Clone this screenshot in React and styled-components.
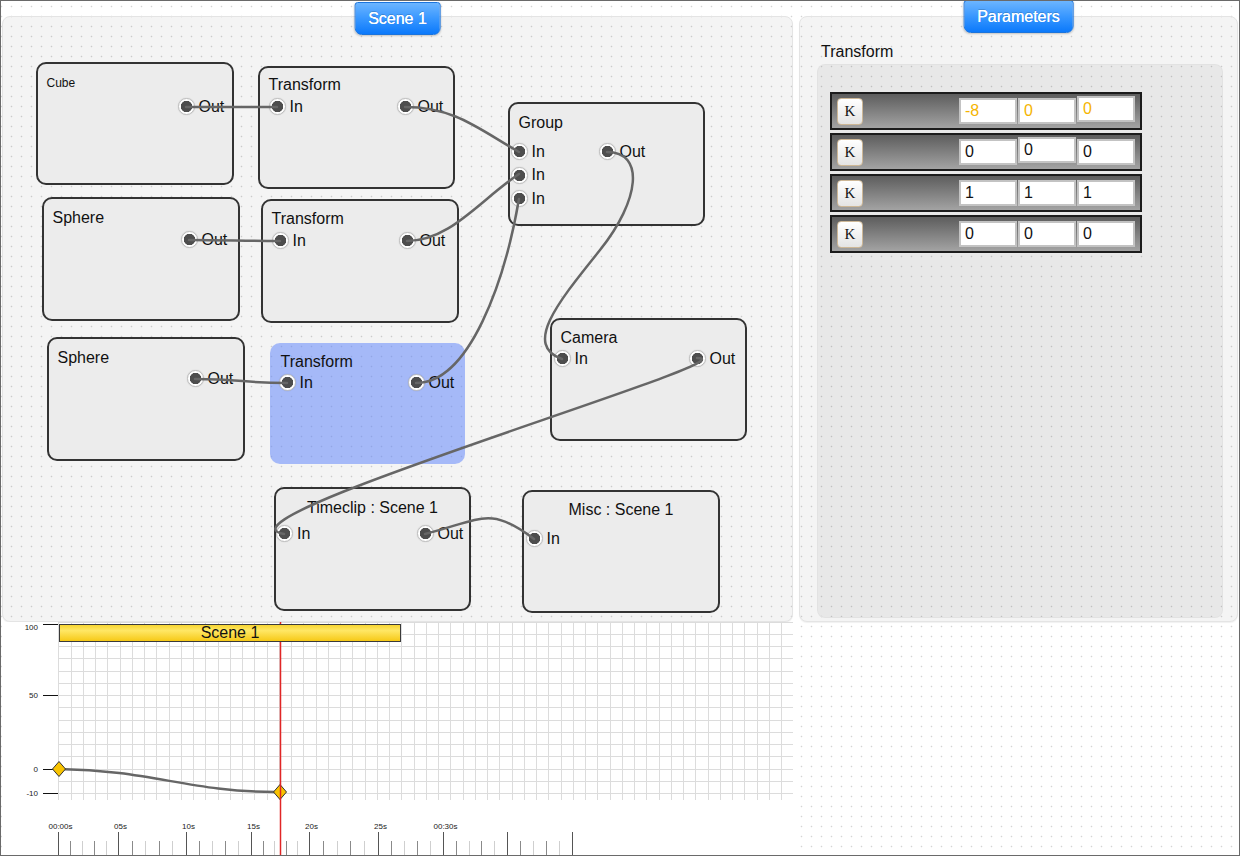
import React from 'react'
import styled, { createGlobalStyle } from 'styled-components'

const GlobalStyle = createGlobalStyle`
  html, body {
    margin: 0;
    padding: 0;
    background: #fff;
  }
  body {
    font-family: 'Liberation Sans', Arial, sans-serif;
    color: #111;
  }
`

const dots = `radial-gradient(circle at 1.5px 6.5px, rgba(0,0,0,0.17) 0.6px, transparent 1.1px)`

const Screen = styled.div`
  width: 1240px;
  height: 856px;
  box-sizing: border-box;
  border: 1px solid #6a6a6a;
  background-color: #fff;
  background-image: ${dots};
  background-size: 10px 10px;
  background-attachment: fixed;
  display: grid;
  grid-template-columns: 791px 439px;
  grid-template-rows: 606px 1fr;
  column-gap: 6px;
  padding: 15px 0 0 1px;
  overflow: hidden;
`

const Panel = styled.section`
  position: relative;
  box-sizing: border-box;
  background-color: #f4f4f4;
  background-image: ${dots};
  background-size: 10px 10px;
  background-attachment: fixed;
  border: 1px solid #e4e4e4;
  border-radius: 8px;
  box-shadow: 0 1px 1px rgba(0, 0, 0, 0.06);
`

const Tab = styled.div`
  position: absolute;
  top: ${(p) => p.$top}px;
  left: 50%;
  transform: translateX(-50%);
  height: 33px;
  padding: 0 13px;
  box-sizing: border-box;
  display: flex;
  align-items: center;
  background: linear-gradient(#6cb5ff, #3897ff 50%, #0b79fb);
  border: 1px solid #1b74dc;
  border-radius: 3px 3px 7px 7px;
  box-shadow: 0 1px 2px rgba(0, 0, 0, 0.2);
  color: #fff;
  font-size: 16px;
  text-shadow: 0 0 0.4px #fff, 0 -1px 0 rgba(0, 0, 0, 0.18);
  white-space: nowrap;
  z-index: 3;
`

/* ---------- node graph ---------- */

const NodeBox = styled.div.attrs((p) => ({
  style: { left: p.$x - 3, top: p.$y - 17, width: p.$w, height: p.$h },
}))`
  position: absolute;
  box-sizing: border-box;
  background: ${(p) => (p.$selected ? 'rgba(100, 136, 251, 0.55)' : '#ececec')};
  border: 2px solid ${(p) => (p.$selected ? 'transparent' : '#333')};
  border-radius: 10px;
  display: flex;
  flex-direction: column;
  z-index: 1;
`

const NodeTitle = styled.div`
  margin-top: ${(p) => p.$top}px;
  padding: 0 8.5px;
  height: 20px;
  line-height: 20px;
  font-size: ${(p) => (p.$small ? 12 : 16)}px;
  text-align: ${(p) => (p.$center ? 'center' : 'left')};
  white-space: nowrap;
`

const PortGrid = styled.div`
  display: grid;
  grid-template-columns: ${(p) => p.$split}px auto;
  margin-top: ${(p) => p.$top}px;
`

const PortCol = styled.div`
  display: flex;
  flex-direction: column;
  gap: ${(p) => p.$gap || 0}px;
  padding-left: ${(p) => p.$pad || 0}px;
`

const PortRow = styled.div`
  display: flex;
  align-items: center;
  height: 22px;
  font-size: 16px;
`

const Socket = styled.span`
  flex: none;
  width: 17px;
  height: 17px;
  box-sizing: border-box;
  border-radius: 50%;
  border: 1px solid #bdbdbd;
  background: radial-gradient(circle, #4d4d4d 0 5.4px, #fff 6px);
  box-shadow: 0 0 1px rgba(0, 0, 0, 0.25);
`

const PortLabel = styled.span`
  margin-left: 4px;
`

const WireLayer = styled.svg`
  position: absolute;
  inset: 0;
  width: 100%;
  height: 100%;
  pointer-events: none;
  overflow: visible;
  z-index: 2;
`

const NODES = [
  { title: 'Cube', x: 36, y: 62, w: 198, h: 123, small: true, ty: 21, py: 45, outX: 150 },
  { title: 'Transform', x: 258, y: 66, w: 197, h: 123, ty: 19, py: 41, ins: 1, inX: 19, outX: 147 },
  { title: 'Sphere', x: 42, y: 197, w: 198, h: 124, ty: 21, py: 43, outX: 147 },
  { title: 'Transform', x: 261, y: 199, w: 198, h: 124, ty: 20, py: 42, ins: 1, inX: 19, outX: 146 },
  { title: 'Sphere', x: 47, y: 337, w: 198, h: 124, ty: 21, py: 42, outX: 148 },
  { title: 'Transform', x: 270, y: 343, w: 195, h: 121, ty: 19, py: 40, ins: 1, inX: 17, outX: 146, selected: true },
  { title: 'Group', x: 508, y: 102, w: 197, h: 124, ty: 21, py: 50, ins: 3, inX: 11, outX: 99, gap: 1.5 },
  { title: 'Camera', x: 550, y: 318, w: 197, h: 123, ty: 20, py: 41, ins: 1, inX: 12, outX: 147 },
  { title: 'Timeclip : Scene 1', x: 274, y: 487, w: 197, h: 124, ty: 21, py: 47, ins: 1, inX: 10, outX: 151, center: true },
  { title: 'Misc : Scene 1', x: 522, y: 490, w: 198, h: 123, ty: 20, py: 49, ins: 1, inX: 12, center: true, noOut: true },
]

const WIRES = [
  'M186 107 L277 107',
  'M405 107 C455 107, 480 130, 519 152',
  'M189 240 C230 240, 240 241, 280 241',
  'M407 241 C450 241, 480 200, 519 174',
  'M195 379 C240 379, 245 383, 287 383',
  'M416 383 C470 383, 505 280, 519 199',
  'M607 152 C645 152, 640 200, 600 250 S522 345, 562 359',
  'M697 358 C760 358, 200 520, 284 534',
  'M425 534 C480 520, 490 505, 534 539',
]

const GraphNode = ({ node }) => {
  const inputs = Array.from({ length: node.ins || 0 })
  return (
    <NodeBox $x={node.x} $y={node.y} $w={node.w} $h={node.h} $selected={node.selected}>
      <NodeTitle $top={node.ty - 12} $small={node.small} $center={node.center}>
        {node.title}
      </NodeTitle>
      <PortGrid $split={node.outX - 10.5} $top={node.py - node.ty - 21.5}>
        <PortCol $pad={node.inX ? node.inX - 10.5 : 0} $gap={node.gap}>
          {inputs.map((_, i) => (
            <PortRow key={i}>
              <Socket />
              <PortLabel>In</PortLabel>
            </PortRow>
          ))}
        </PortCol>
        {!node.noOut && (
          <PortCol>
            <PortRow>
              <Socket />
              <PortLabel>Out</PortLabel>
            </PortRow>
          </PortCol>
        )}
      </PortGrid>
    </NodeBox>
  )
}

const SceneGraph = () => (
  <Panel>
    <Tab $top={-15}>Scene 1</Tab>
    {NODES.map((n, i) => (
      <GraphNode key={i} node={n} />
    ))}
    <WireLayer viewBox="3 17 789 604" preserveAspectRatio="none">
      {WIRES.map((d, i) => (
        <path key={i} d={d} fill="none" stroke="#666" strokeWidth="2.5" strokeLinecap="round" />
      ))}
    </WireLayer>
  </Panel>
)

/* ---------- parameters ---------- */

const ParamPanel = styled(Panel)`
  display: flex;
  flex-direction: column;
  padding: 25px 14px 3px 17px;
`

const ParamHeading = styled.div`
  margin: 0 0 2px 4px;
  height: 20px;
  line-height: 20px;
  font-size: 16px;
`

const ParamBox = styled.div`
  flex: 1;
  border-radius: 8px;
  background-color: #e8e8e8;
  background-image: ${dots};
  background-size: 10px 10px;
  background-attachment: fixed;
  box-shadow: inset 0 0 0 1px #e2e2e2;
  padding: 28px 13px;
  display: flex;
  flex-direction: column;
  gap: 3px;
`

const ParamRow = styled.div`
  width: 312px;
  height: 38px;
  box-sizing: border-box;
  border: 2px solid #1c1c1c;
  background: linear-gradient(#5d5d5d, #a3a3a3);
  display: flex;
  align-items: center;
  padding: 0 5px;
`

const KeyButton = styled.button`
  width: 26px;
  height: 27px;
  padding: 0;
  box-sizing: border-box;
  border: 1px solid #cdb796;
  border-radius: 4px;
  background: linear-gradient(#ffffff, #e4e4e4);
  font-family: 'Liberation Serif', 'Times New Roman', serif;
  font-size: 15px;
  color: #111;
  margin-right: auto;
`

const ValueInput = styled.input`
  width: 58px;
  height: 26px;
  box-sizing: border-box;
  margin: 0 0 0 1px;
  padding: 0 4px;
  border: 2px solid #c3c3c3;
  background: #fff;
  font-family: 'Liberation Sans', Arial, sans-serif;
  font-size: 16px;
  color: ${(p) => (p.$animated ? '#f5b400' : '#111')};
  outline: none;
  transform: translateY(${(p) => (p.$raise ? -2 : 0)}px);
`

const PARAMS = [
  { values: ['-8', '0', '0'], animated: true, raise: 2 },
  { values: ['0', '0', '0'], raise: 1 },
  { values: ['1', '1', '1'] },
  { values: ['0', '0', '0'] },
]

const Parameters = () => (
  <ParamPanel>
    <Tab $top={-17}>Parameters</Tab>
    <ParamHeading>Transform</ParamHeading>
    <ParamBox>
      {PARAMS.map((row, i) => (
        <ParamRow key={i}>
          <KeyButton>K</KeyButton>
          {row.values.map((v, j) => (
            <ValueInput
              key={j}
              readOnly
              value={v}
              $animated={row.animated}
              $raise={row.raise === j}
            />
          ))}
        </ParamRow>
      ))}
    </ParamBox>
  </ParamPanel>
)

/* ---------- timeline ---------- */

const Timeline = styled.div`
  position: relative;
  background: #fff;
`

const Chart = styled.svg`
  display: block;
  width: 791px;
  height: 233px;
  font-family: 'Liberation Sans', Arial, sans-serif;
`

const Clip = styled.div`
  position: absolute;
  left: 57px;
  top: 2px;
  width: 342px;
  height: 18px;
  box-sizing: border-box;
  border: 1px solid #3a3a3a;
  background: linear-gradient(#f7d531, #ffe765 35%, #f6c917);
  font-size: 16px;
  line-height: 16px;
  text-align: center;
`

const vLines = []
for (let x = 58.3; x <= 784; x += 12.25) vLines.push(Math.round(x) + 0.5)
const hLines = []
for (let y = 621.5; y <= 800; y += 12.25) hLines.push(Math.round(y) + 0.5)

const Y_TICKS = [
  { y: 624, label: '100', ly: 630 },
  { y: 695, label: '50', ly: 698 },
  { y: 769, label: '0', ly: 772 },
  { y: 793, label: '-10', ly: 796 },
]

const MAJORS = [58, 118, 186, 251, 309, 378, 443, 507, 572]
const LABELS = { 0: '00:00s', 1: '05s', 2: '10s', 3: '15s', 4: '20s', 5: '25s', 6: '00:30s' }

const Diamond = ({ x, y }) => (
  <polygon
    points={`${x},${y - 7.5} ${x + 6.5},${y} ${x},${y + 7.5} ${x - 6.5},${y}`}
    fill="#f8c300"
    stroke="#333"
    strokeWidth="1"
  />
)

const TimelineChart = () => {
  const minors = []
  for (let i = 0; i < MAJORS.length - 1; i++) {
    const a = MAJORS[i]
    const b = MAJORS[i + 1]
    for (let k = 1; k < 5; k++) minors.push({ x: Math.round(a + ((b - a) * k) / 5) + 0.5, light: k % 2 === 0 })
  }
  return (
    <Timeline>
      <Chart viewBox="2 622 791 233">
        <g stroke="#dcdcdc" strokeWidth="1" shapeRendering="crispEdges">
          {vLines.map((x) => (
            <line key={x} x1={x} y1={622} x2={x} y2={800} />
          ))}
          {hLines.map((y) => (
            <line key={y} x1={58} y1={y} x2={794} y2={y} />
          ))}
        </g>
        <g stroke="#111" strokeWidth="1" shapeRendering="crispEdges">
          {Y_TICKS.map((t) => (
            <line key={t.y} x1={43} y1={t.y + 0.5} x2={58} y2={t.y + 0.5} />
          ))}
        </g>
        <g fontSize="8" fill="#222" textAnchor="end">
          {Y_TICKS.map((t) => (
            <text key={t.y} x={38} y={t.ly}>
              {t.label}
            </text>
          ))}
        </g>
        <path d="M59 769 C150 770, 190 792, 275 792" fill="none" stroke="#666" strokeWidth="2.5" />
        <Diamond x={59} y={769} />
        <Diamond x={280} y={792} />
        <g shapeRendering="crispEdges" strokeWidth="1">
          {MAJORS.map((x) => (
            <line key={x} x1={x + 0.5} y1={832} x2={x + 0.5} y2={856} stroke="#555" />
          ))}
          {minors.map((m) => (
            <line key={m.x} x1={m.x} y1={841} x2={m.x} y2={856} stroke={m.light ? '#cfcfcf' : '#8a8a8a'} />
          ))}
        </g>
        <g fontSize="8" fill="#222" textAnchor="middle">
          {MAJORS.map((x, i) =>
            LABELS[i] ? (
              <text key={x} x={x + 2.5} y={829}>
                {LABELS[i]}
              </text>
            ) : null
          )}
        </g>
        <line x1={280.5} y1={622} x2={280.5} y2={856} stroke="#e02626" strokeWidth="1.5" />
      </Chart>
      <Clip>Scene 1</Clip>
    </Timeline>
  )
}

const App = () => (
  <>
    <GlobalStyle />
    <Screen>
      <SceneGraph />
      <Parameters />
      <TimelineChart />
    </Screen>
  </>
)

export default App
